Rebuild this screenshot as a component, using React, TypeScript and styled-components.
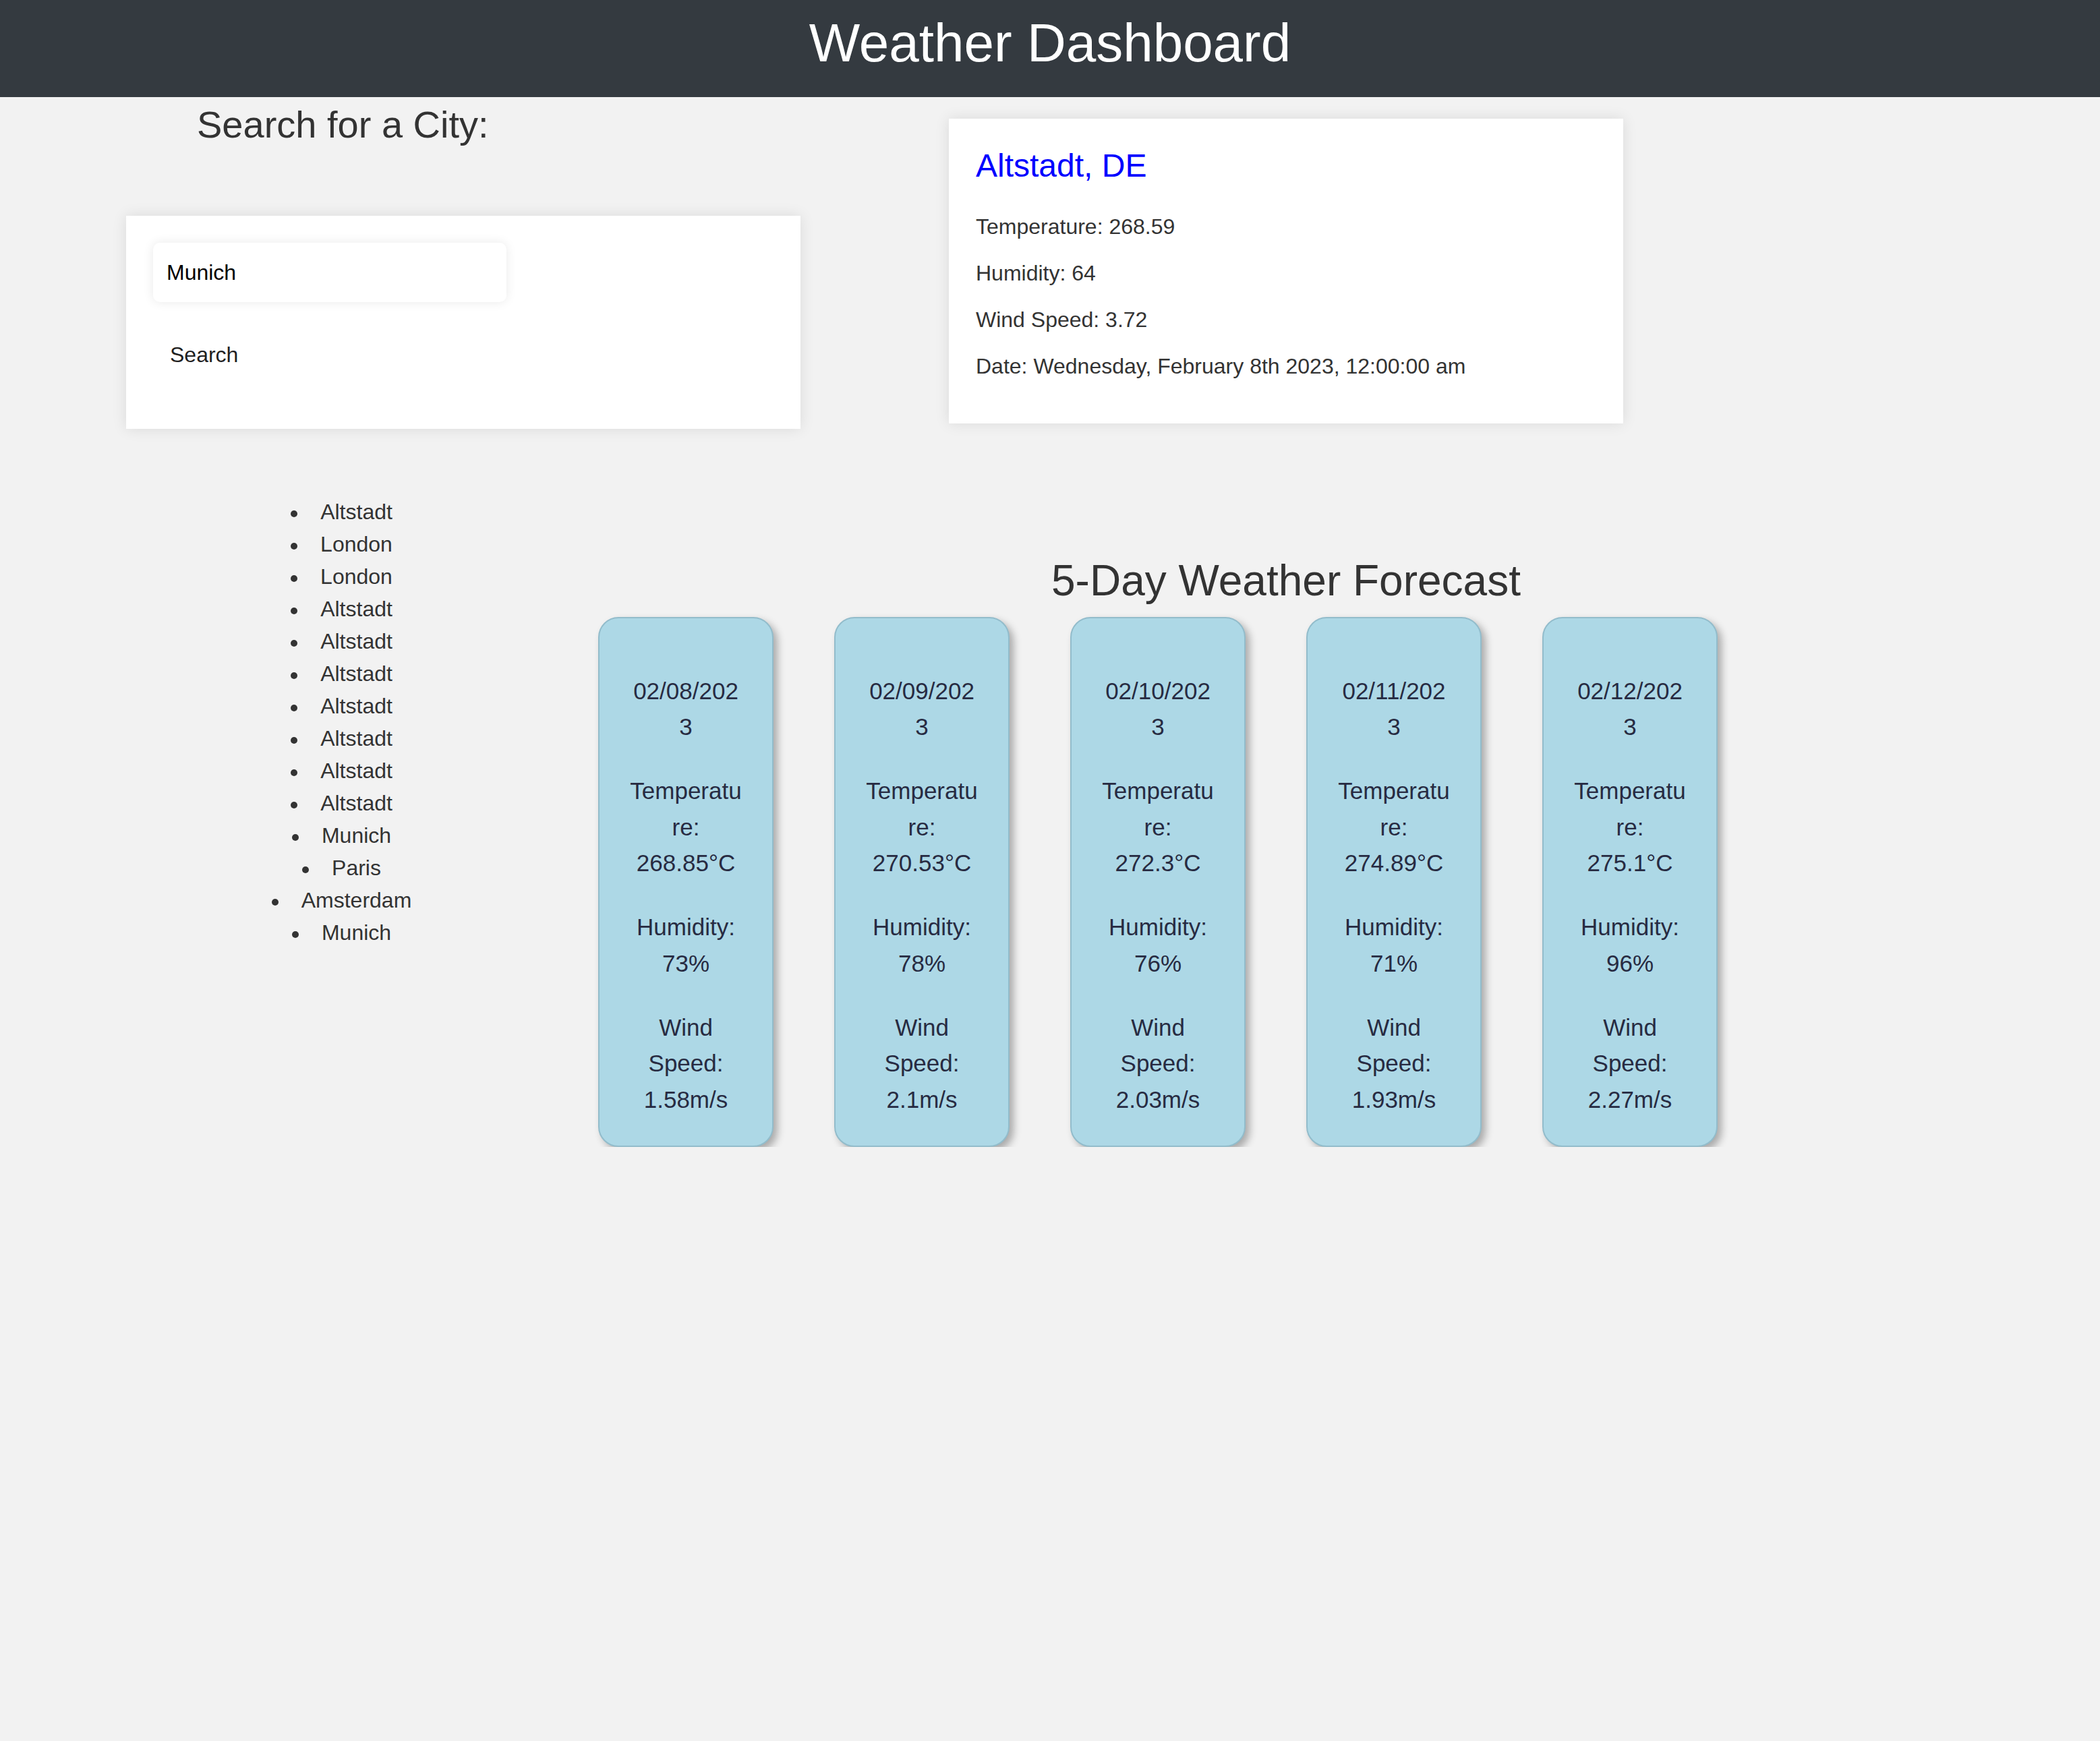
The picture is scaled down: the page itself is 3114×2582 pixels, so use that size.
import React from "react";
import styled, { createGlobalStyle } from "styled-components";

const GlobalStyle = createGlobalStyle`
  html, body {
    margin: 0;
    padding: 0;
    background: #f2f2f2;
    font-family: "Liberation Sans", Arial, Helvetica, sans-serif;
    color: #333;
  }
  * { box-sizing: border-box; }
`;

const Header = styled.header`
  background: #343a40;
  padding: 18px 0 34px;
`;

const Title = styled.h1`
  margin: 0;
  color: #fff;
  font-size: 80px;
  font-weight: normal;
  line-height: normal;
  text-align: center;
`;

const TopRow = styled.div`
  display: flex;
  align-items: flex-start;
`;

const SearchColumn = styled.section`
  flex: none;
  padding: 8px 0 0 187px;
`;

const SearchHeading = styled.h2`
  margin: 0 0 0 105px;
  font-size: 56px;
  font-weight: normal;
  line-height: normal;
  color: #333;
`;

const Card = styled.div`
  width: 1000px;
  background: #fff;
  box-shadow: 0 0 20px rgba(0, 0, 0, 0.1);
`;

const SearchCard = styled(Card)`
  margin-top: 103px;
  padding: 40px 40px 71px;
`;

const CityInput = styled.input`
  display: block;
  width: 524px;
  height: 88px;
  padding: 0 20px;
  border: none;
  border-radius: 10px;
  background: #fff;
  box-shadow: 0 0 16px rgba(0, 0, 0, 0.09);
  font-family: inherit;
  font-size: 32px;
  color: #000;
  outline: none;
`;

const SearchButton = styled.button`
  display: block;
  margin-top: 40px;
  padding: 20px 25px;
  background: transparent;
  border: none;
  font-family: inherit;
  font-size: 32px;
  line-height: normal;
  color: #1f1f1f;
  cursor: pointer;
`;

const WeatherCard = styled(Card)`
  margin: 32px 0 0 220px;
  padding: 42px 40px 66px;
`;

const CityTitle = styled.h2`
  margin: 0 0 45px;
  color: #0000ff;
  font-size: 48px;
  font-weight: normal;
  line-height: normal;
`;

const InfoLine = styled.p`
  margin: 0 0 32px;
  font-size: 32px;
  line-height: normal;
  color: #333;
  &:last-child { margin-bottom: 0; }
`;

const BottomRow = styled.div`
  display: flex;
  align-items: flex-start;
  margin-top: 99px;
`;

const HistoryColumn = styled.aside`
  flex: none;
  width: 860px;
  padding-left: 197px;
`;

const HistoryList = styled.ul`
  margin: 0;
  padding: 0;
  list-style: none;
  text-align: center;
`;

const HistoryItem = styled.li`
  font-size: 32px;
  line-height: 48px;
  color: #333;
  &::before {
    content: "";
    display: inline-block;
    width: 10px;
    height: 10px;
    border-radius: 50%;
    background: #333;
    margin: 0 34px 0 -44px;
    vertical-align: middle;
  }
`;

const ForecastSection = styled.section`
  flex: 1;
  margin-top: 89px;
  padding-right: 160px;
`;

const ForecastHeading = styled.h2`
  margin: 0 0 17px;
  font-size: 64px;
  font-weight: normal;
  line-height: normal;
  text-align: center;
  color: #333;
`;

const CardRow = styled.div`
  display: flex;
  gap: 90px;
  padding-left: 27px;
`;

const ForecastCard = styled.div`
  width: 260px;
  flex: none;
  padding: 39px 42px 0;
  background: #add8e6;
  border: 2px solid #92bccb;
  border-radius: 30px;
  box-shadow: 6px 6px 12px rgba(0, 0, 0, 0.3);
  text-align: center;
  color: #272b42;
  font-size: 35px;
  line-height: 53.5px;
  overflow-wrap: anywhere;
`;

const ForecastLine = styled.p`
  margin: 41.5px 0;
`;

const Value = styled.span`
  display: block;
`;

const history = [
  "Altstadt", "London", "London", "Altstadt", "Altstadt", "Altstadt", "Altstadt",
  "Altstadt", "Altstadt", "Altstadt", "Munich", "Paris", "Amsterdam", "Munich",
];

const forecast = [
  { date: "02/08/2023", temp: "268.85", hum: "73", wind: "1.58" },
  { date: "02/09/2023", temp: "270.53", hum: "78", wind: "2.1" },
  { date: "02/10/2023", temp: "272.3", hum: "76", wind: "2.03" },
  { date: "02/11/2023", temp: "274.89", hum: "71", wind: "1.93" },
  { date: "02/12/2023", temp: "275.1", hum: "96", wind: "2.27" },
];

export default function App() {
  return (
    <>
      <GlobalStyle />
      <Header>
        <Title>Weather Dashboard</Title>
      </Header>
      <TopRow>
        <SearchColumn>
          <SearchHeading>Search for a City:</SearchHeading>
          <SearchCard>
            <CityInput type="text" defaultValue="Munich" />
            <SearchButton type="button">Search</SearchButton>
          </SearchCard>
        </SearchColumn>
        <WeatherCard>
          <CityTitle>Altstadt, DE</CityTitle>
          <InfoLine>Temperature: 268.59</InfoLine>
          <InfoLine>Humidity: 64</InfoLine>
          <InfoLine>Wind Speed: 3.72</InfoLine>
          <InfoLine>Date: Wednesday, February 8th 2023, 12:00:00 am</InfoLine>
        </WeatherCard>
      </TopRow>
      <BottomRow>
        <HistoryColumn>
          <HistoryList>
            {history.map((c, i) => (
              <HistoryItem key={i}>{c}</HistoryItem>
            ))}
          </HistoryList>
        </HistoryColumn>
        <ForecastSection>
          <ForecastHeading>5-Day Weather Forecast</ForecastHeading>
          <CardRow>
            {forecast.map((d) => (
              <ForecastCard key={d.date}>
                <ForecastLine>{d.date}</ForecastLine>
                <ForecastLine>
                  Temperature: <Value>{d.temp}°C</Value>
                </ForecastLine>
                <ForecastLine>
                  Humidity: <Value>{d.hum}%</Value>
                </ForecastLine>
                <ForecastLine>
                  Wind Speed: <Value>{d.wind}m/s</Value>
                </ForecastLine>
              </ForecastCard>
            ))}
          </CardRow>
        </ForecastSection>
      </BottomRow>
    </>
  );
}
